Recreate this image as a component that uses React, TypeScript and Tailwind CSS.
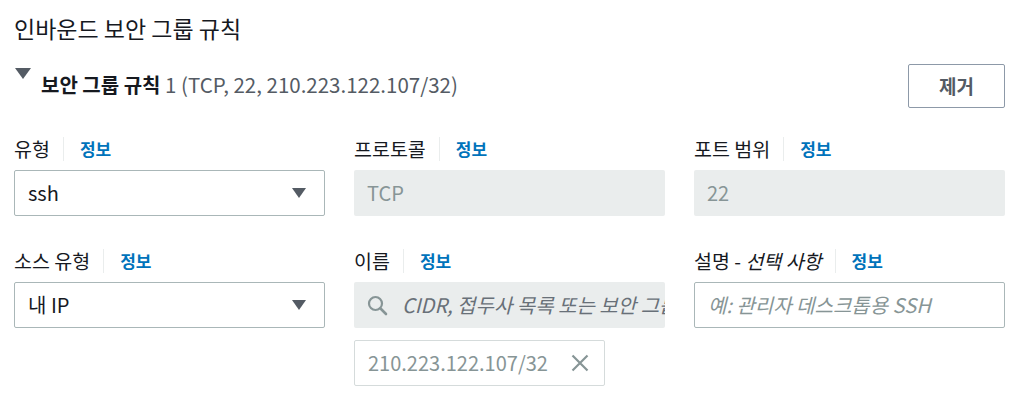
import React from "react";

const font = { fontFamily: '"Noto Sans CJK KR", "Noto Sans", sans-serif' };

function Label({ children }: { children: React.ReactNode }) {
  return (
    <div className="flex items-center h-[24px] text-[19.5px] leading-[24px] text-[#16191f]">
      <span className="whitespace-nowrap">{children}</span>
      <span className="ml-[13px] mr-[16px] w-px h-[24px] bg-[#eaeded]" />
      <span className="font-bold text-[#0073bb] text-[17px]">정보</span>
    </div>
  );
}

function Caret() {
  return (
    <svg width="14" height="10" viewBox="0 0 14 10" className="shrink-0">
      <path d="M0 0 H14 L7 10 Z" fill="#545b64" />
    </svg>
  );
}

function Select({ value }: { value: string }) {
  return (
    <div className="mt-[9px] h-[46px] flex items-center justify-between pl-[13px] pr-[18px] border border-[#aab7b8] rounded-[2px] bg-white text-[20px] text-[#16191f]">
      <span>{value}</span>
      <Caret />
    </div>
  );
}

function Disabled({ value }: { value: string }) {
  return (
    <div className="mt-[9px] h-[46px] flex items-center pl-[13px] rounded-[2px] bg-[#eaeded] text-[20px] text-[#879596]">
      {value}
    </div>
  );
}

export default function App() {
  return (
    <div style={font} className="bg-white w-[1024px] h-[399px] overflow-hidden pl-[14px] pt-[14px] text-[#16191f]">
      <h2 className="text-[23px] leading-[28px] font-normal">인바운드 보안 그룹 규칙</h2>
      <div className="mt-[22px] w-[991px] flex justify-between h-[44px]">
        <div className="flex items-start">
          <svg width="16" height="11" viewBox="0 0 16 11" className="mt-[4px] ml-[1px]">
            <path d="M0 0 H16 L8 11 Z" fill="#545b64" />
          </svg>
          <div className="ml-[10px] mt-[8px] text-[20px] leading-[24px] whitespace-nowrap">
            <span className="font-bold">보안 그룹 규칙</span>
            <span className="text-[#545b64] text-[20.5px]"> 1 (TCP, 22, 210.223.122.107/32)</span>
          </div>
        </div>
        <button className="w-[97px] h-[44px] border border-[#8d99a8] rounded-[2px] bg-white text-[19px] font-bold text-[#545b64]">
          제거
        </button>
      </div>

      <div className="mt-[29px] w-[991px] grid grid-cols-3 gap-x-[29px]">
        <div>
          <Label>유형</Label>
          <Select value="ssh" />
        </div>
        <div>
          <Label>프로토콜</Label>
          <Disabled value="TCP" />
        </div>
        <div>
          <Label>포트 범위</Label>
          <Disabled value="22" />
        </div>
      </div>

      <div className="mt-[33px] w-[991px] grid grid-cols-3 gap-x-[29px]">
        <div>
          <Label>소스 유형</Label>
          <Select value="내 IP" />
        </div>
        <div>
          <Label>이름</Label>
          <div className="mt-[9px] h-[46px] flex items-center pl-[13px] rounded-[2px] bg-[#eaeded] overflow-hidden">
            <svg width="21" height="21" viewBox="0 0 21 21" className="shrink-0">
              <circle cx="8.5" cy="8.5" r="6.5" fill="none" stroke="#879596" strokeWidth="2.2" />
              <path d="M13.5 13.5 L19 19" stroke="#879596" strokeWidth="2.6" strokeLinecap="round" />
            </svg>
            <span className="ml-[14px] italic text-[20px] text-[#687078] whitespace-nowrap">
              CIDR, 접두사 목록 또는 보안 그룹
            </span>
          </div>
          <div className="mt-[12px] w-[251px] h-[46px] flex items-center justify-between pl-[13px] pr-[14px] border border-[#d5dbdb] rounded-[2px] bg-white">
            <span className="text-[20px] text-[#879596]">210.223.122.107/32</span>
            <svg width="20" height="20" viewBox="0 0 20 20">
              <path d="M2.5 2.5 L17.5 17.5 M17.5 2.5 L2.5 17.5" stroke="#879596" strokeWidth="2.2" />
            </svg>
          </div>
        </div>
        <div>
          <div className="flex items-center h-[24px] text-[19.5px] leading-[24px] text-[#16191f]">
            <span className="whitespace-nowrap">
              설명 - <span className="italic">선택 사항</span>
            </span>
            <span className="ml-[13px] mr-[16px] w-px h-[24px] bg-[#eaeded]" />
            <span className="font-bold text-[#0073bb] text-[17px]">정보</span>
          </div>
          <div className="mt-[9px] h-[46px] flex items-center pl-[13px] border border-[#aab7b8] rounded-[2px] bg-white overflow-hidden">
            <span className="italic text-[20px] text-[#879596] whitespace-nowrap">예: 관리자 데스크톱용 SSH</span>
          </div>
        </div>
      </div>
    </div>
  );
}
